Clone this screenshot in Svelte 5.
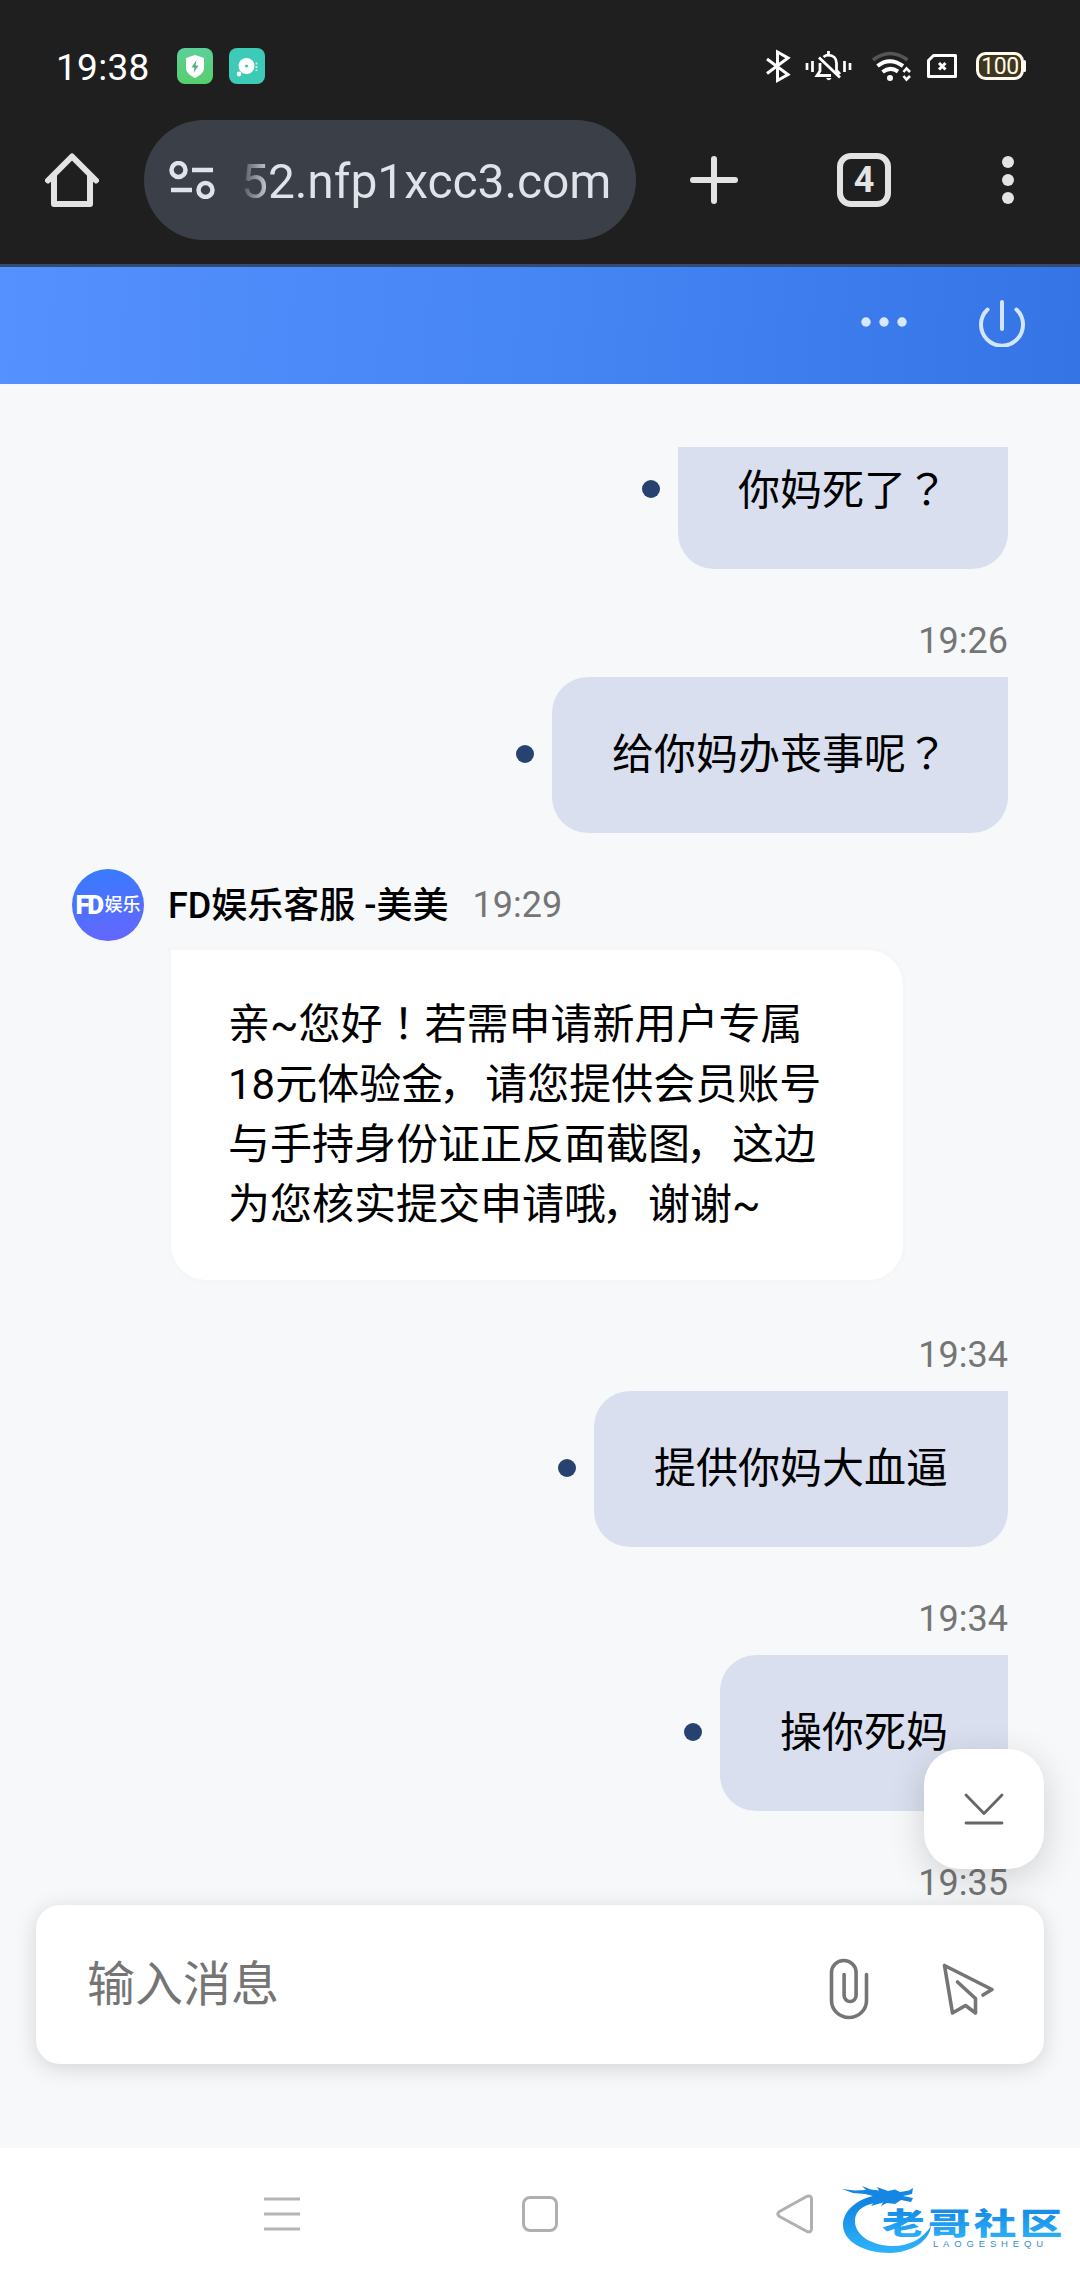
<script>
  const messages = [
    { kind: 'out', text: '你妈死了？', clipped: true },
    { kind: 'out', time: '19:26', text: '给你妈办丧事呢？' },
    {
      kind: 'in',
      name: 'FD娱乐客服 -美美',
      time: '19:29',
      lines: ['亲~您好！若需申请新用户专属', '18元体验金，请您提供会员账号', '与手持身份证正反面截图，这边', '为您核实提交申请哦，谢谢~']
    },
    { kind: 'out', time: '19:34', text: '提供你妈大血逼' },
    { kind: 'out', time: '19:34', text: '操你死妈' },
    { kind: 'out', time: '19:35' }
  ];

  // Split a line so that full-width punctuation can be set in its own style.
  const parts = (s) => s.split(/([？！，])/).filter(Boolean);
</script>

{#snippet rich(s)}{#each parts(s) as p}{#if p === '？' || p === '！'}<span class="mid">{p}</span>{:else if p === '，'}<span class="comma">{p}</span>{:else}{p}{/if}{/each}{/snippet}

<div class="screen">
  <header class="chrome">
    <div class="status">
      <span class="clock">19:38</span>
      <svg class="app" viewBox="0 0 36 36">
        <defs><linearGradient id="gs" x1="0" y1="0" x2="0" y2="1"><stop offset="0" stop-color="#5dcf9a" /><stop offset="1" stop-color="#56cf6c" /></linearGradient></defs>
        <rect width="36" height="36" rx="8" fill="url(#gs)" />
        <path d="M18 7l9 3v10c0 5-5 8-9 10c-4-2-9-5-9-10V10z" fill="#fff" />
        <path d="M19.500 12l-5 7.500h3l-1 5.500l5-7.500h-3z" fill="#4fae7c" />
      </svg>
      <svg class="app second" viewBox="0 0 36 36">
        <rect width="36" height="36" rx="8" fill="#3dcab6" />
        <circle cx="17.500" cy="18" r="8" fill="#fff" /><circle cx="17.500" cy="18" r="1.600" fill="#3dcab6" />
        <circle cx="10" cy="26" r="2.400" fill="#fff" />
        <path d="M27.500 14.500v2M27.500 18v2M27.500 21.500v1.500" stroke="#c5f2ec" stroke-width="1.800" />
      </svg>
      <svg class="tray" viewBox="760 46 270 40" fill="none" stroke="#fff">
        <path d="M767 59l21 15.500l-10.500 6V52l10.500 6l-21 15.500" stroke-width="3" />
        <path d="M807 63v7M812.500 61v11M844.500 61v11M850 63v7" stroke-width="2.700" />
        <path d="M820 63v8l-3 4.500h14M819 57.500l21 20M823.500 57c1.500-1.200 3-1.800 5-1.800c5 0 8 3.200 8 8v7l3.500 4M828.500 51v4" stroke-width="2.800" />
        <path d="M826 78h5.500q-2.700 4.500-5.500 0z" fill="#fff" stroke="none" />
        <path d="M873 60q17-13 34.500 0" stroke="#555" stroke-width="3.500" />
        <path d="M877.500 66q12-9.500 25.500 0M882.500 72q7.500-6 15.500-.5" stroke-width="4" />
        <circle cx="890" cy="78" r="3" fill="#fff" stroke="none" />
        <path d="M903.500 72l3-3.500l3.500 3.500M903.500 76l3 3.500l3.500-3.500" stroke-width="2.600" />
        <path d="M933.500 55.500H955.500V76.500H928.500V60.500z" stroke-width="3" stroke-linejoin="round" />
        <path d="M939 63l6.500 6.500M945.500 63l-6.500 6.500" stroke-width="3" />
        <rect x="977.500" y="53.500" width="45" height="25" rx="8" fill="#40361d" stroke="#fffbee" stroke-width="3" />
        <path d="M1024.500 61.500v9" stroke="#fffbee" stroke-width="3" stroke-linecap="round" />
        <text x="1000" y="73.500" text-anchor="middle" fill="#fffbee" stroke="none" class="pct">100</text>
      </svg>
    </div>
    <div class="toolbar">
      <svg class="home" viewBox="0 0 54 54" fill="none" stroke="#e3e3e3" stroke-width="6" stroke-linecap="round" stroke-linejoin="round">
        <path d="M3 27.500L27 3.500l24 24M9 23v28h36V23" />
      </svg>
      <div class="pill">
        <svg class="tune" viewBox="0 0 46 38" fill="none" stroke="#e1e3ea" stroke-width="4.500">
          <circle cx="9.500" cy="9" r="7" /><path d="M23 9h21M2 29h21" /><circle cx="36.500" cy="29" r="7" />
        </svg>
        <span class="url">52.nfp1xcc3.com</span>
      </div>
      <svg class="plus" viewBox="0 0 48 48" stroke="#e3e3e3" stroke-width="6" stroke-linecap="round"><path d="M24 3v42M3 24h42" /></svg>
      <span class="tabs">4</span>
      <svg class="kebab" viewBox="0 0 12 48" fill="#e3e3e3"><circle cx="6" cy="6" r="6" /><circle cx="6" cy="24" r="6" /><circle cx="6" cy="42" r="6" /></svg>
    </div>
  </header>

  <div class="banner">
    <svg class="more" viewBox="0 0 46 10" fill="#d8e8ff"><circle cx="5" cy="5" r="4.700" /><circle cx="23" cy="5" r="4.700" /><circle cx="41" cy="5" r="4.700" /></svg>
    <svg class="power" viewBox="0 0 48 48" fill="none" stroke="#d3e6ff" stroke-width="4" stroke-linecap="round"><path d="M24 3v27M9.500 10.500a21 21 0 1 0 29 0" /></svg>
  </div>

  <main class="chat">
    <div class="log">
      {#each messages as m}
        {#if m.kind === 'in'}
          <section class="in">
            <div class="who">
              <span class="avatar"><b>FD</b>娱乐</span>
              <span class="name">{m.name}</span>
              <span class="time">{m.time}</span>
            </div>
            <div class="bubble white">
              {#each m.lines as line}<p>{@render rich(line)}</p>{/each}
            </div>
          </section>
        {:else}
          <section class="out">
            {#if m.time}<span class="time">{m.time}</span>{/if}
            {#if m.text}
              <div class="row" class:first={m.clipped}>
                <i class="dot"></i>
                <div class="bubble blue">{@render rich(m.text)}</div>
              </div>
            {/if}
          </section>
        {/if}
      {/each}
    </div>
    <button class="fab" aria-label="scroll to latest">
      <svg viewBox="0 0 42 36" fill="none" stroke="#666" stroke-width="2.800" stroke-linecap="round" stroke-linejoin="round"><path d="M3 3l18 18.500L39 3M3 31h36" /></svg>
    </button>
    <div class="composer">
      <span class="hint">输入消息</span>
      <svg class="clip" viewBox="0 0 40 62" fill="none" stroke="#757575" stroke-width="3.600" stroke-linecap="round">
        <path d="M37.500 16.500V42.500a17.500 17 0 0 1-35 0V14.500a12.300 12 0 0 1 24.600 0V37.500a6 6 0 0 1-12 0V16.500" />
      </svg>
      <svg class="send" viewBox="0 0 54 54" fill="none" stroke="#757575" stroke-width="3.600" stroke-linecap="round" stroke-linejoin="round">
        <path d="M42 33l9-5.500L3.500 3.500l8 47.500l13-7.500l10 7.500V36.500L16.500 20" />
      </svg>
    </div>
  </main>

  <nav class="nav">
    <svg class="menu" viewBox="0 0 36 36" stroke="#b5b5b5" stroke-width="3"><path d="M0 3h36M0 18h36M0 33h36" /></svg>
    <span class="square"></span>
    <svg class="back" viewBox="0 0 38 40" fill="none" stroke="#b0b0b0" stroke-width="3" stroke-linejoin="round"><path d="M3.500 17.500L31 2.300q4.500-1.500 4.500 3V34.500q0 4.500-4.500 3L3.500 22.500q-3.500-2.500 0-5z" /></svg>
    <svg class="logo" viewBox="0 0 240 90">
      <defs>
        <linearGradient id="lg" x1="0" y1="0" x2="0" y2="1"><stop offset="0" stop-color="#0d7fe0" /><stop offset="1" stop-color="#2fb4fa" /></linearGradient>
      </defs>
      <path d="M42 20C18 25 8 38 8 50C8 66 28 78 55 78C78 77 94 66 96 51C88 64 74 71 58 71C38 71 20 61 20 46C20 36 28 29 46 27z" fill="url(#lg)" />
      <path d="M7 14L20 15.500L31 15L27 11L36 14.500L44 15.500L42 12L53 16L60 14.500L65 17L74 15.500L78 13L77 19L68 21L78 23L76 27L66 25L60 29L52 28L46 31L48 27.500L36 31L40 26L33 27L38 21L30 19L18 18z" fill="#1586e4" />
      <g transform="translate(47 58.500) scale(1.42 1)"><text class="cn" textLength="127" fill="url(#lg)">老哥社区</text></g>
      <text x="98" y="71.500" textLength="110" class="en">LAOGESHEQU</text>
    </svg>
  </nav>
</div>

<style>
  :global(body) { margin: 0; }
  .screen {
    width: 1080px; height: 2280px; display: flex; flex-direction: column; overflow: hidden;
    font-family: Roboto, "Noto Sans CJK SC", sans-serif; background: #f6f8fa; color: #000;
  }
  svg { display: block; flex: none; }
  .chrome { height: 264px; flex: none; background: #1f1f1f; border-bottom: 3px solid #344a70; }
  .status { display: flex; align-items: center; height: 120px; padding: 12px 50px 0 56px; box-sizing: border-box; }
  .clock { color: #fff; font-size: 37px; letter-spacing: 0.3px; line-height: 44px; width: 121px; padding-top: 3px; }
  .app { width: 36px; height: 36px; }
  .second { margin-left: 16px; }
  .tray { width: 270px; height: 40px; margin-left: auto; }
  .pct { font: 23px Roboto, sans-serif; letter-spacing: -0.5px; }
  .toolbar { display: flex; align-items: center; height: 120px; padding-left: 45px; }
  .home { width: 54px; height: 54px; }
  .pill { width: 492px; height: 120px; border-radius: 60px; background: #3b4048; margin-left: 45px; display: flex; align-items: center; box-sizing: border-box; padding-left: 25px; }
  .tune { width: 46px; height: 38px; }
  .url {
    margin: 3px 0 0 26px; font-size: 48px; line-height: 60px; letter-spacing: -0.08px; white-space: nowrap;
    color: transparent; background: linear-gradient(90deg, #4c5159 0, #e1e3ea 32px); background-clip: text; -webkit-background-clip: text;
  }
  .plus { width: 48px; height: 48px; margin-left: 54px; }
  .tabs { width: 54px; height: 54px; box-sizing: border-box; border: 6px solid #e3e3e3; border-radius: 14px; margin-left: 99px; color: #e3e3e3; font-weight: 700; font-size: 36px; line-height: 43px; text-align: center; }
  .kebab { width: 12px; height: 48px; margin-left: 111px; }
  .banner { height: 117px; flex: none; display: flex; align-items: center; justify-content: flex-end; padding-right: 54px; background: linear-gradient(94deg, #5591ff, #4685f4 50%, #3574e5); }
  .more { width: 46px; height: 10px; margin-right: 71px; margin-top: -7px; }
  .power { width: 48px; height: 48px; margin-top: -5px; }
  .chat { flex: none; height: 1764px; position: relative; box-sizing: border-box; padding: 63px 72px 0; }
  .log { display: flex; flex-direction: column; height: 1458px; overflow: hidden; }
  .out { display: flex; flex-direction: column; align-items: flex-end; margin-bottom: 51px; flex: none; }
  .time { font-size: 36px; line-height: 42px; color: #757575; }
  .out > .time { margin-bottom: 15px; }
  .row { display: flex; align-items: center; gap: 18px; }
  .dot { width: 18px; height: 18px; border-radius: 50%; background: #28426f; margin-top: -3px; }
  .bubble { font-size: 42px; line-height: 60px; box-sizing: border-box; white-space: nowrap; }
  .mid { font-family: "Noto Sans CJK TC", sans-serif; line-height: 1; }
  .comma { margin: 0 4px 0 -4px; }
  .blue { height: 156px; padding: 48px 60px; border-radius: 36px 0 36px 36px; background: #d9dfee; }
  .first .blue { height: 122px; padding: 14px 60px 48px; border-radius: 0 0 36px 36px; }
  .first .dot { margin-top: -38px; }
  .in { margin-top: -15px; margin-bottom: 51px; flex: none; }
  .who { display: flex; align-items: center; height: 72px; }
  .avatar { width: 72px; height: 72px; border-radius: 50%; display: flex; align-items: center; justify-content: center; background: linear-gradient(170deg, #347cff, #6865ff); color: #fff; font-size: 18px; font-weight: 500; line-height: 24px; white-space: nowrap; }
  .avatar b { font-size: 26px; font-weight: 900; letter-spacing: -2.5px; margin-right: 3px; }
  .name { font-size: 36px; font-weight: 500; line-height: 48px; margin-left: 24px; padding-top: 2px; }
  .who .time { margin-left: 24px; }
  .white { width: 738px; height: 336px; margin: 6px 0 0 96px; padding: 45px 57px; border: 3px solid #f5f6f7; border-radius: 0 38px 38px 38px; background: #fff; background-clip: padding-box; }
  .white p { margin: 0; height: 60px; }
  .fab { position: absolute; right: 36px; top: 1365px; width: 120px; height: 120px; border: 0; border-radius: 36px; background: #fff; box-shadow: 0 9px 36px rgba(0, 0, 0, 0.16); display: flex; align-items: center; justify-content: center; padding: 2px 0 0; }
  .fab svg { width: 42px; height: 36px; }
  .composer { height: 159px; margin: 0 -36px; box-sizing: border-box; padding: 0 49px 0 51px; border-radius: 24px; background: #fff; box-shadow: 0 4px 22px rgba(0, 0, 0, 0.15); display: flex; align-items: center; position: relative; }
  .hint { font-size: 48px; line-height: 60px; color: #757575; flex: 1; }
  .clip { width: 40px; height: 62px; margin-top: 8px; }
  .send { width: 54px; height: 54px; margin: 8px 0 0 72px; }
  .nav { flex: 1; background: #fff; display: flex; align-items: center; padding-left: 264px; }
  .menu { width: 36px; height: 36px; }
  .square { width: 30px; height: 30px; border: 3px solid #b0b0b0; border-radius: 8px; margin-left: 222px; }
  .back { width: 38px; height: 40px; margin-left: 218px; }
  .logo { width: 240px; height: 90px; margin: 11px 0 0 21px; }
  .cn { font: 900 30px "Noto Sans CJK SC", sans-serif; }
  .en { font: 9.500px "Liberation Sans", sans-serif; fill: #3a8ccc; }
</style>
